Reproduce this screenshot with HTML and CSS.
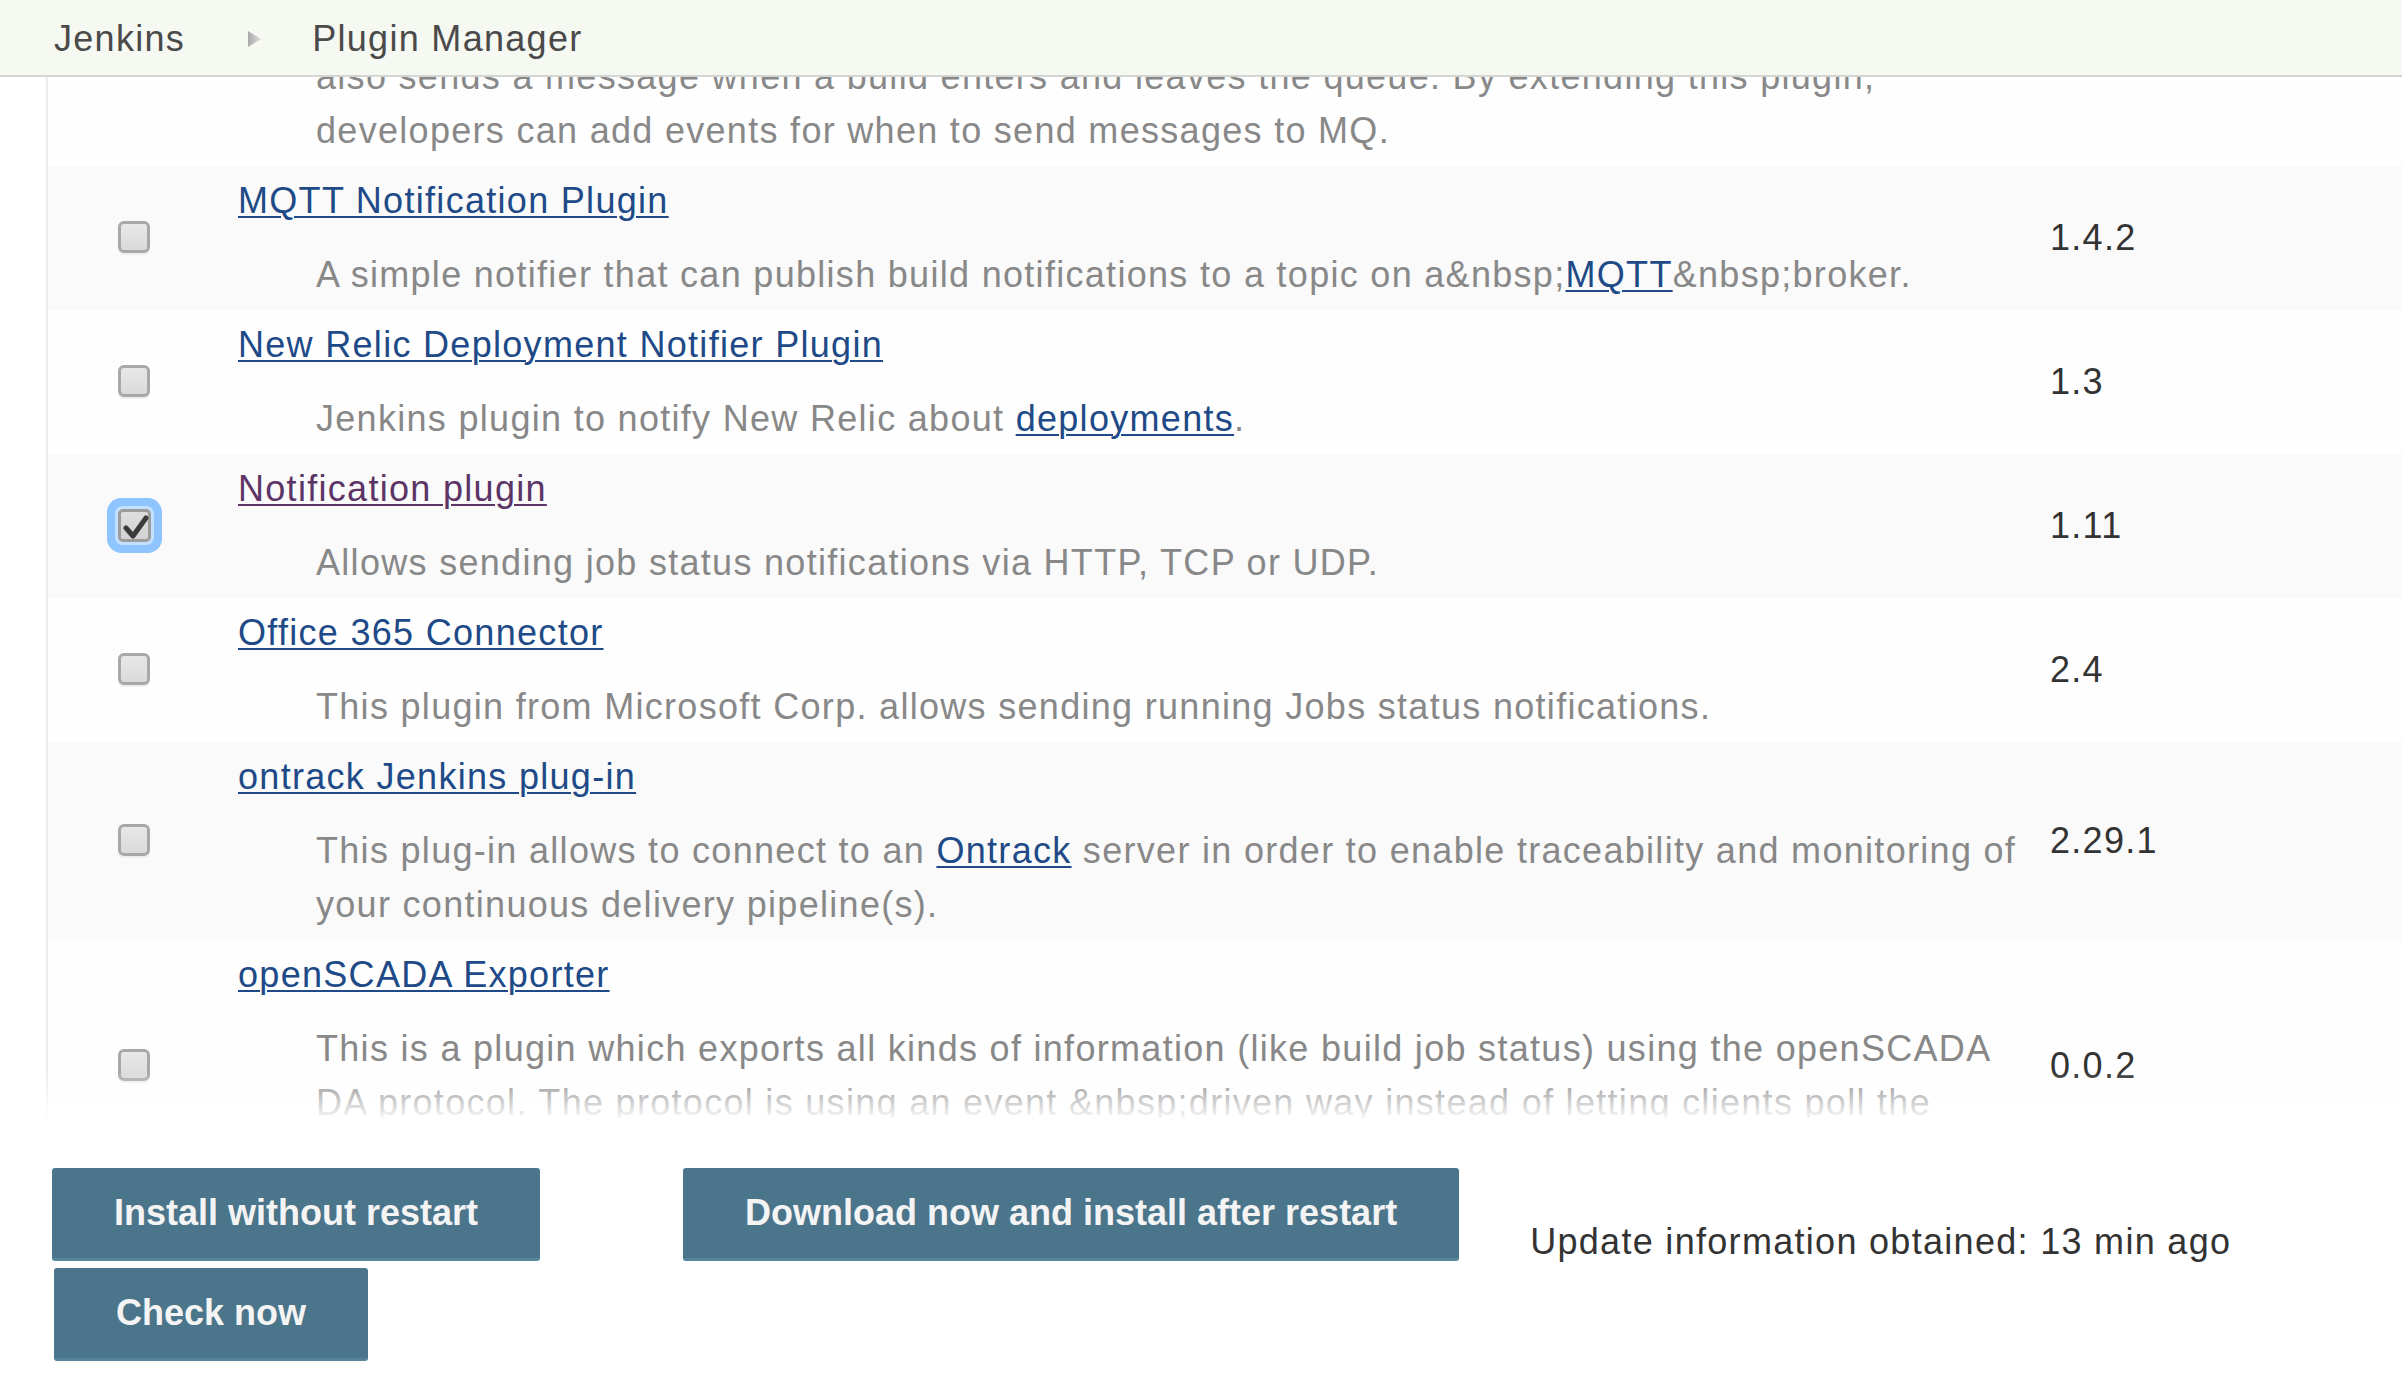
FILE: index.html
```html
<!DOCTYPE html>
<html lang="en">
<head>
<meta charset="utf-8">
<title>Plugin Manager [Jenkins]</title>
<link rel="stylesheet" href="styles.css">
</head>
<body>
<div class="header">
  <a class="crumb" href="#">Jenkins</a>
  <svg class="crumb-arrow" width="13" height="16" viewBox="0 0 13 16">
    <defs>
      <linearGradient id="ag" x1="0" y1="0" x2="1" y2="0">
        <stop offset="0" stop-color="#a9a9a9"/>
        <stop offset="1" stop-color="#dcdcdc"/>
      </linearGradient>
    </defs>
    <polygon points="0,0 13,8 0,16" fill="url(#ag)"/>
  </svg>
  <a class="crumb" href="#">Plugin Manager</a>
</div>

<div class="viewport">
  <div class="plugins">
    <div class="row partial">
      <div class="cell-check"></div>
      <div class="cell-name">
        <div class="desc">also sends a message when a build enters and leaves the queue. By extending this plugin, developers can add events for when to send messages to MQ.</div>
      </div>
      <div class="cell-version"></div>
    </div>

    <div class="row odd">
      <div class="cell-check"><span class="cb"></span></div>
      <div class="cell-name">
        <a class="title" href="#">MQTT Notification Plugin</a>
        <div class="desc">A simple notifier that can publish build notifications to a topic on a&amp;nbsp;<a href="#">MQTT</a>&amp;nbsp;broker.</div>
      </div>
      <div class="cell-version">1.4.2</div>
    </div>

    <div class="row">
      <div class="cell-check"><span class="cb"></span></div>
      <div class="cell-name">
        <a class="title" href="#">New Relic Deployment Notifier Plugin</a>
        <div class="desc">Jenkins plugin to notify New Relic about <a href="#">deployments</a>.</div>
      </div>
      <div class="cell-version">1.3</div>
    </div>

    <div class="row odd">
      <div class="cell-check">
        <span class="cb checked focused">
          <svg class="tick" width="26" height="24" viewBox="0 0 26 24"><path d="M3 13 L10 21 L23 3" fill="none" stroke="#3b3b3b" stroke-width="5" stroke-linejoin="round" stroke-linecap="round"/></svg>
        </span>
      </div>
      <div class="cell-name">
        <a class="title visited" href="#">Notification plugin</a>
        <div class="desc">Allows sending job status notifications via HTTP, TCP or UDP.</div>
      </div>
      <div class="cell-version">1.11</div>
    </div>

    <div class="row">
      <div class="cell-check"><span class="cb"></span></div>
      <div class="cell-name">
        <a class="title" href="#">Office 365 Connector</a>
        <div class="desc">This plugin from Microsoft Corp. allows sending running Jobs status notifications.</div>
      </div>
      <div class="cell-version">2.4</div>
    </div>

    <div class="row odd">
      <div class="cell-check"><span class="cb"></span></div>
      <div class="cell-name">
        <a class="title" href="#">ontrack Jenkins plug-in</a>
        <div class="desc">This plug-in allows to connect to an <a href="#">Ontrack</a> server in order to enable traceability and monitoring of your continuous delivery pipeline(s).</div>
      </div>
      <div class="cell-version">2.29.1</div>
    </div>

    <div class="row">
      <div class="cell-check"><span class="cb"></span></div>
      <div class="cell-name">
        <a class="title" href="#">openSCADA Exporter</a>
        <div class="desc">This is a plugin which exports all kinds of information (like build job status) using the openSCADA DA protocol. The protocol is using an event &amp;nbsp;driven way instead of letting clients poll the server for changes.</div>
      </div>
      <div class="cell-version">0.0.2</div>
    </div>
  </div>
  <div class="fade"></div>
</div>

<div class="bottom">
  <div class="bottom-row">
    <button class="btn" type="button">Install without restart</button>
    <button class="btn btn-download" type="button">Download now and install after restart</button>
    <span class="update-info">Update information obtained: 13 min ago</span>
  </div>
  <div class="bottom-row second">
    <button class="btn btn-check" type="button">Check now</button>
  </div>
</div>
</body>
</html>
```

FILE: styles.css
```css
html, body {
  margin: 0;
  padding: 0;
  background: #ffffff;
}

body {
  font-family: "Liberation Sans", Arial, Helvetica, sans-serif;
  font-size: 36px;
  line-height: 54px;
  letter-spacing: 1.3px;
  color: #333333;
  overflow: hidden;
}

a {
  color: #204a87;
  text-decoration: underline;
  text-decoration-thickness: 2px;
  text-underline-offset: 3px;
}

/* header / breadcrumb */
.header {
  height: 77px;
  box-sizing: border-box;
  padding-top: 2px;
  padding-left: 54px;
  display: flex;
  align-items: center;
  background: #f6f8f2;
  border-bottom: 2px solid #d4d6d1;
}

.crumb {
  color: #4a4a4a;
  text-decoration: none;
}

.crumb-arrow {
  margin-left: 63px;
  margin-right: 51px;
  flex: none;
}

/* plugin table */
.viewport {
  position: relative;
  height: 1041px;
  overflow: hidden;
}

.plugins {
  margin-left: 46px;
  border-left: 2px solid #ededed;
}

.row {
  display: grid;
  grid-template-columns: 170px 1790px 1fr;
  column-gap: 20px;
  align-items: center;
  padding: 8px 0;
  background: #fefefe;
}

.row.odd {
  background: #fafafa;
}

.row.partial {
  margin-top: -35px;
}

.row.partial .desc {
  margin-top: 0;
}

.cell-check {
  display: flex;
  align-items: center;
}

.cell-name {
  min-width: 0;
}

.title {
  display: inline-block;
}

.title.visited {
  color: #5c3566;
}

.desc {
  margin-top: 20px;
  padding-left: 78px;
  color: #888888;
}

.cell-version {
  color: #333333;
  padding-left: 2px;
}

/* checkboxes */
.cb {
  position: relative;
  display: block;
  box-sizing: border-box;
  width: 32px;
  height: 32px;
  margin-left: 70px;
  margin-top: -2px;
  border: 3px solid #a8a8a8;
  border-radius: 6px;
  background: linear-gradient(#e8e8e8, #dadada);
  box-shadow: 0 2px 0 #eeeeee;
}

.cb.checked {
  width: 33px;
  height: 33px;
  border-color: #9c9c9c;
  background: linear-gradient(#dedede, #d2d2d2);
}

.cb.focused {
  box-shadow: 0 0 0 3px #c4e0ff, 0 0 0 11px #8ec4ff;
  border-radius: 5px;
}

.tick {
  position: absolute;
  left: 2px;
  top: 3px;
}

/* bottom fade */
.fade {
  position: absolute;
  left: 0;
  right: 0;
  bottom: 0;
  height: 46px;
  background: linear-gradient(rgba(255, 255, 255, 0), rgba(255, 255, 255, 0.92));
}

/* bottom sticker */
.bottom {
  padding: 50px 0 0 52px;
}

.bottom-row {
  display: flex;
  align-items: flex-start;
}

.bottom-row.second {
  margin-top: 7px;
  padding-left: 2px;
}

.btn {
  height: 93px;
  box-sizing: border-box;
  padding: 0 62px;
  margin: 0;
  border: none;
  border-bottom: 3px solid #55849c;
  border-radius: 3px;
  background: #4b758b;
  color: #f4f4f4;
  font-family: "Liberation Sans", Arial, Helvetica, sans-serif;
  font-size: 36px;
  font-weight: bold;
  letter-spacing: 0;
  line-height: 54px;
  cursor: pointer;
}

.btn-download {
  margin-left: 143px;
}

.update-info {
  margin-left: 71px;
  margin-top: 47px;
  margin-bottom: -12px;
  color: #333333;
  white-space: nowrap;
}
```
